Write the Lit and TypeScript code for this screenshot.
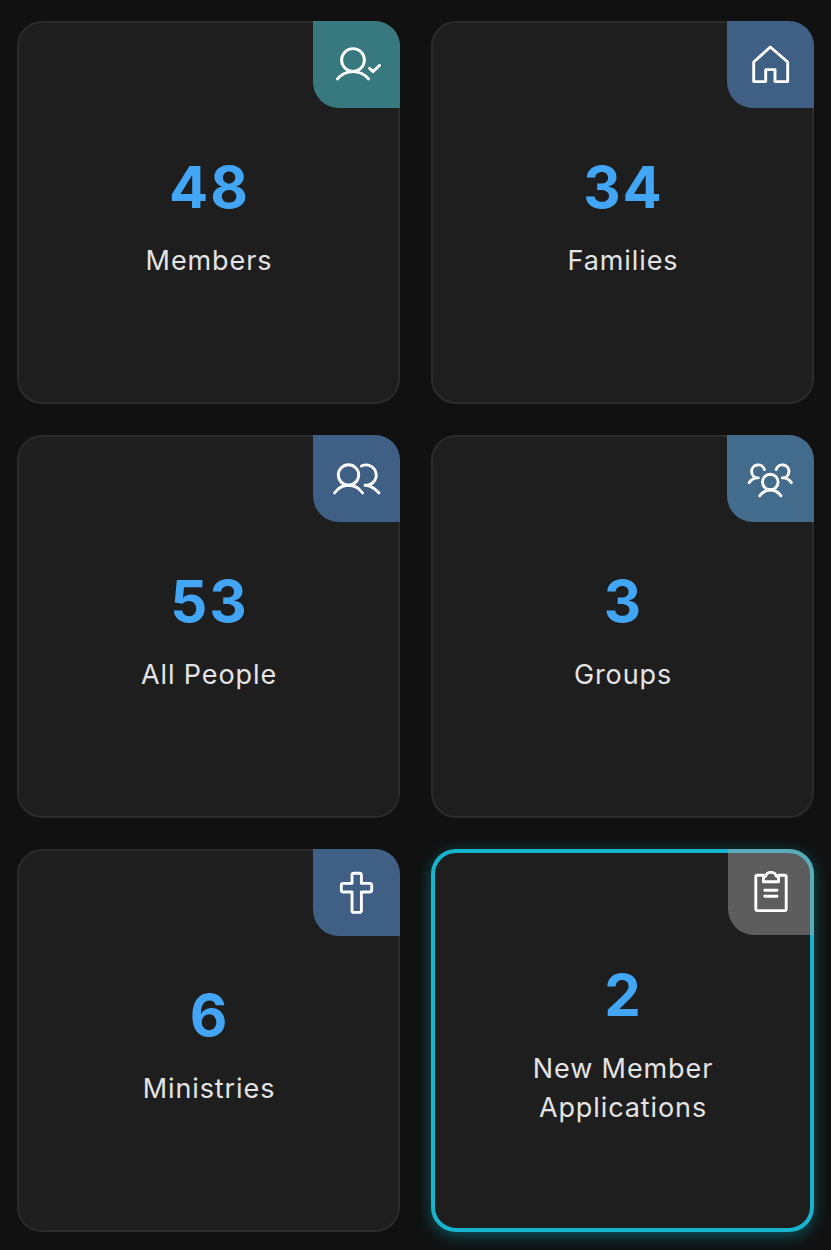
import { LitElement, html, css, svg } from "lit";
import { customElement, property } from "lit/decorators.js";

const icons: Record<string, unknown> = {
  member: svg`<circle cx="40" cy="39" r="11.4"/><path d="M24.4 58Q30.5 50.6 40 50.6T55.6 58M56.6 47.4L60 50.6L66.6 44.4"/>`,
  home: svg`<path d="M43.3 26L26.7 41V60.6H38.7V48.6H48V60.6H60.7V41Z"/>`,
  people: svg`<circle cx="35.5" cy="39.9" r="10.2"/><path d="M21.6 58Q27 50.3 35.5 50.3T49.6 58M48.5 31A10.2 10.2 0 1 1 52 50.3C58.5 50.5 62 53.4 66 58"/>`,
  group: svg`<circle cx="43.3" cy="47" r="7.8"/><path d="M32.7 60.8Q37 55 43.3 55T54 60.8M37.4 34.6A6.5 6.5 0 1 0 31.3 42.9C27.2 42.8 24.5 44.2 22.2 47.6M49.2 34.6A6.5 6.5 0 1 1 55.3 42.9C59.4 42.8 62.1 44.2 64.4 47.6"/>`,
  cross: svg`<path d="M41 24.2H46.4Q48.4 24.2 48.4 26.2V34.4H56.7Q58.7 34.4 58.7 36.4V41Q58.7 43 56.7 43H48.4V61.4Q48.4 63.4 46.4 63.4H41Q39 63.4 39 61.4V43H30.3Q28.3 43 28.3 41V36.4Q28.3 34.4 30.3 34.4H39V26.2Q39 24.2 41 24.2Z"/>`,
  clipboard: svg`<path d="M35.4 26.2H29.3Q27.8 26.2 27.8 27.7V60.1Q27.8 61.6 29.3 61.6H56.7Q58.2 61.6 58.2 60.1V27.7Q58.2 26.2 56.7 26.2H50.6M35.4 32.8V29.8Q35.4 27.5 37.8 27C38.8 22.2 47.2 22.2 48.2 27Q50.6 27.5 50.6 29.8V32.8ZM36.8 41.2H49M36.8 47.2H49"/>`,
};

@customElement("stat-card")
class StatCard extends LitElement {
  @property() value = "";
  @property() label = "";
  @property() icon = "";
  @property() tone = "blue";
  static styles = css`
    :host { display: block; min-width: 0; }
    .card {
      position: relative; box-sizing: border-box; width: 100%; height: 100%;
      display: flex; flex-direction: column; align-items: center; justify-content: center;
      border: 2px solid #2b2b2b; border-radius: 25px; background: #1e1e1e;
      padding-top: 7px; text-align: center;
    }
    .card.gray { padding-top: 6px; border: 4px solid #16b5cd; box-shadow: 0 4px 15px rgba(0, 188, 212, 0.4); }
    .badge {
      position: absolute; top: -2px; right: -2px; width: 87px; height: 87px;
      border-radius: 0 25px 0 26px; background: #3f5f84;
    }
    .badge.teal { background: #38787f; }
    .badge.steel { background: #436b8c; }
    .badge.gray { top: -4px; right: -4px; width: 86px; height: 86px; background: rgba(163, 163, 163, 0.48); }
    svg { display: block; width: 87px; height: 87px; fill: none; stroke: #fff; stroke-width: 2.9; stroke-linecap: round; stroke-linejoin: round; }
    .value { padding-left: 2px; font-size: 58px; line-height: 70px; font-weight: 700; letter-spacing: 2px; color: #42a5f5; }
    .label { margin-top: 19px; padding-left: 1px; font-size: 27px; line-height: 39px; font-weight: 400; letter-spacing: 0.9px; color: #e4e4e4; max-width: 240px; }
  `;
  render() {
    return html`<div class="card ${this.tone}">
      <div class="badge ${this.tone}"><svg viewBox="0 0 87 87">${icons[this.icon]}</svg></div>
      <div class="value">${this.value}</div>
      <div class="label">${this.label}</div>
    </div>`;
  }
}

@customElement("app-root")
class AppRoot extends LitElement {
  static styles = css`
    :host {
      display: block; box-sizing: border-box; height: 1250px; overflow: hidden;
      padding: 21px 17px 0 17px; background: #111;
      font-family: Inter, "Liberation Sans", sans-serif;
    }
    .grid { display: grid; grid-template-columns: repeat(2, 383px); grid-auto-rows: 383px; gap: 31px; }
  `;
  render() {
    return html`<div class="grid">
      <stat-card value="48" label="Members" icon="member" tone="teal"></stat-card>
      <stat-card value="34" label="Families" icon="home"></stat-card>
      <stat-card value="53" label="All People" icon="people"></stat-card>
      <stat-card value="3" label="Groups" icon="group" tone="steel"></stat-card>
      <stat-card value="6" label="Ministries" icon="cross"></stat-card>
      <stat-card value="2" label="New Member Applications" icon="clipboard" tone="gray"></stat-card>
    </div>`;
  }
}
